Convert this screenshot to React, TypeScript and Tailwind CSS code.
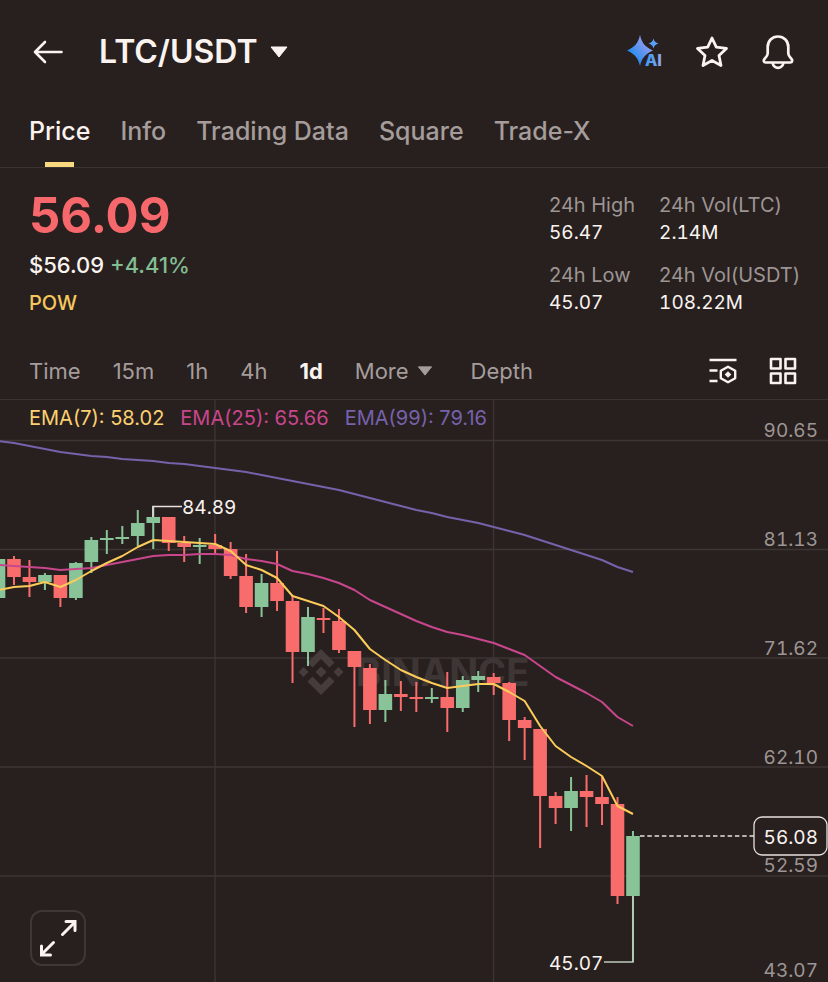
import React from 'react';

type Candle = [top: number, bottom: number, high: number, low: number, up: 0 | 1];

const STEP = 15.475;
const FIRST_X = -1.5;
const xAt = (index: number) => FIRST_X + index * STEP;

// Body top, body bottom, wick top, wick bottom, rising
const candles: Candle[] = [
  [159, 198, 159, 198, 1],
  [159, 177, 156, 185, 0],
  [177, 182, 160, 197, 0],
  [175, 182, 173, 190, 1],
  [175, 198, 175, 207, 0],
  [163, 198, 162, 200, 1],
  [140, 162, 137, 173, 1],
  [138, 140, 130, 154, 1],
  [137, 139, 126, 144, 1],
  [123, 136, 110, 146, 1],
  [117, 123, 106, 149, 1],
  [117, 143, 117, 151, 0],
  [143, 147, 136, 162, 0],
  [145, 147, 138, 164, 1],
  [145, 149, 134, 154, 0],
  [149, 176, 142, 179, 0],
  [176, 207, 154, 213, 0],
  [183, 207, 174, 217, 1],
  [183, 201, 151, 211, 0],
  [201, 252, 195, 283, 0],
  [217, 252, 207, 266, 1],
  [218, 220, 208, 233, 0],
  [221, 250, 209, 253, 0],
  [251, 267, 251, 327, 0],
  [268, 310, 264, 324, 0],
  [294, 310, 280, 322, 1],
  [294, 297, 281, 311, 0],
  [297, 299, 282, 312, 0],
  [297, 299, 288, 303, 1],
  [297, 308, 272, 332, 0],
  [280, 308, 276, 312, 1],
  [276, 280, 271, 292, 1],
  [277, 283, 273, 295, 0],
  [283, 320, 282, 341, 0],
  [320, 328, 317, 360, 0],
  [329, 396, 329, 448, 0],
  [396, 408, 392, 424, 0],
  [391, 408, 377, 431, 1],
  [391, 397, 375, 427, 0],
  [397, 404, 376, 425, 0],
  [404, 496, 397, 504, 0],
  [436, 496, 431, 562, 1],
];

const ema7 = [
  190, 187, 186, 182, 187, 180, 171, 163, 156, 147, 140, 141, 142, 143, 144, 151, 165, 170, 178, 196, 201,
  206, 217, 230, 249, 260, 270, 277, 283, 288, 286, 284, 284, 292, 301, 326, 346, 357, 366, 376, 406, 414,
];

const ema25 = [
  165, 166, 167, 168, 170, 169, 168, 165, 162, 159, 156, 155, 155, 154, 154, 155, 159, 161, 164, 171, 174,
  178, 183, 190, 200, 207, 214, 221, 227, 232, 235, 239, 243, 249, 255, 266, 277, 285, 293, 302, 317, 326,
];

const ema99 = [
  41, 43, 46, 49, 52, 54, 56, 57, 59, 60, 61, 63, 64, 66, 68, 70, 72, 75, 78, 81, 84,
  87, 90, 94, 98, 102, 106, 110, 113, 117, 120, 123, 127, 131, 135, 140, 145, 150, 155, 160, 167, 172,
];

const toPoints = (values: number[]) => values.map((y, i) => `${xAt(i)},${y}`).join(' ');

const priceLevels = [
  { label: '90.65', y: 37 },
  { label: '81.13', y: 146 },
  { label: '71.62', y: 255 },
  { label: '62.10', y: 364 },
  { label: '52.59', y: 472 },
  { label: '43.07', y: 577 },
];

const tabs = ['Price', 'Info', 'Trading Data', 'Square', 'Trade-X'];

const stats = [
  { label: '24h High', value: '56.47' },
  { label: '24h Vol(LTC)', value: '2.14M' },
  { label: '24h Low', value: '45.07' },
  { label: '24h Vol(USDT)', value: '108.22M' },
];

const BackIcon = () => (
  <svg viewBox="0 0 30 24" className="h-6 w-[30px]" fill="none" stroke="currentColor" strokeWidth="2.6" strokeLinecap="round" strokeLinejoin="round">
    <path d="M28.5 12H2M12 2L2 12l10 10" />
  </svg>
);

const Caret = ({ className }: { className: string }) => (
  <svg viewBox="0 0 18 12" className={className} fill="currentColor" stroke="currentColor" strokeWidth="1" strokeLinejoin="round">
    <path d="M1 1h16L9 11z" />
  </svg>
);

const AiIcon = () => (
  <svg viewBox="0 0 36 36" className="h-9 w-9">
    <defs>
      <linearGradient id="spark" x1="0" y1="1" x2="1" y2="0">
        <stop offset="0.3" stopColor="#2f8df0" />
        <stop offset="1" stopColor="#c6a3ee" />
      </linearGradient>
      <linearGradient id="letters" x1="0" y1="0" x2="1" y2="0">
        <stop offset="0.3" stopColor="#4a9df2" />
        <stop offset="1" stopColor="#9aa8f0" />
      </linearGradient>
    </defs>
    <path d="M13 1c1.9 8.500 5.500 12 13 15.500C18.500 20 15 23.500 13 32 11 23.500 7.500 20 0 16.500 7.500 13 11.100 9.500 13 1z" fill="url(#spark)" />
    <path d="M26.500 4.500c.8 3 2 4.200 5 5-3 .8-4.200 2-5 5-.8-3-2-4.200-5-5 3-.8 4.200-2 5-5z" fill="#58a0f3" />
    <text x="18" y="32" fontSize="16" fontWeight="800" fill="url(#letters)" stroke="#28201f" strokeWidth="2" paintOrder="stroke">AI</text>
  </svg>
);

const StarIcon = () => (
  <svg viewBox="0 0 34 34" className="h-[34px] w-[34px]" fill="none" stroke="currentColor" strokeWidth="2.8" strokeLinejoin="round">
    <path d="M17 3l4.300 9.200 10.200 1.200-7.500 7 2 10.100-9-5-9 5 2-10.100-7.500-7 10.200-1.200z" />
  </svg>
);

const BellIcon = () => (
  <svg viewBox="0 0 34 36" className="h-9 w-[34px]" fill="none" stroke="currentColor" strokeWidth="2.7" strokeLinejoin="round">
    <path d="M17 2.500c-6 0-10.300 4.500-10.300 10.500v6.500c0 2-1 3-3 5.200-1.600 1.700-1 3.800 1 3.800h24.600c2 0 2.600-2.100 1-3.800-2-2.200-3-3.200-3-5.200V13C27.300 7 23 2.500 17 2.500z" />
    <path d="M11.500 29c.8 3 2.800 4.800 5.500 4.800s4.700-1.800 5.500-4.800" />
  </svg>
);

const IndicatorIcon = () => (
  <svg viewBox="0 0 28 26" className="h-[26px] w-7" fill="none" stroke="currentColor" strokeWidth="2.4">
    <path d="M.5 2h27M.5 12.500h8M.5 23h8" />
    <path d="M19 8.800l7.200 4v7.400l-7.200 4-7.200-4v-7.400z" strokeLinejoin="round" />
    <path d="M19 13.200l3.300 3.300-3.300 3.300-3.300-3.300z" fill="currentColor" stroke="none" />
  </svg>
);

const LayoutIcon = () => (
  <svg viewBox="0 0 28 28" className="h-7 w-7" fill="none" stroke="currentColor" strokeWidth="2.6" strokeLinejoin="round">
    <rect x="2" y="2" width="9.500" height="9.500" />
    <rect x="16.500" y="2" width="9.500" height="9.500" />
    <rect x="2" y="16.500" width="9.500" height="9.500" />
    <rect x="16.500" y="16.500" width="9.500" height="9.500" />
  </svg>
);

const ExpandIcon = () => (
  <svg viewBox="0 0 38 38" className="h-[38px] w-[38px]" fill="none" stroke="currentColor" strokeWidth="3" strokeLinecap="round">
    <path d="M23.500 15.500L35.500 3.500M27 2.500h9v9" />
    <path d="M14.500 23.500L3 35M2.500 27v9h9" />
  </svg>
);

const Header = () => (
  <header className="flex items-center justify-between px-[33px] pt-7">
    <div className="flex items-center gap-9">
      <button type="button" aria-label="Back">
        <BackIcon />
      </button>
      <button type="button" className="flex items-center gap-3">
        <h1 className="text-[32px] leading-[48px] font-semibold">LTC/USDT</h1>
        <Caret className="h-3 w-[18px]" />
      </button>
    </div>
    <div className="flex items-center gap-8">
      <button type="button" aria-label="AI assistant">
        <AiIcon />
      </button>
      <button type="button" aria-label="Favorite">
        <StarIcon />
      </button>
      <button type="button" aria-label="Alerts">
        <BellIcon />
      </button>
    </div>
  </header>
);

const Tabs = () => (
  <nav className="mt-8 flex gap-[30px] border-b border-[#3a3231] px-[29px] text-[25px] leading-[46px] font-medium text-[#a59d9b]">
    {tabs.map((tab, index) => (
      <a key={tab} href="#" className={index === 0 ? 'flex flex-col items-center text-[#fbf3ef]' : 'flex flex-col items-center'}>
        {tab}
        <span className={index === 0 ? 'mt-2 h-[5px] w-[29px] bg-[#f8d97f]' : 'mt-2 h-[5px]'} />
      </a>
    ))}
  </nav>
);

const Summary = () => (
  <section className="flex justify-between pt-5 pr-7 pl-[29px]">
    <div>
      <p className="text-[49px] leading-[55px] font-bold text-[#f6686b]">56.09</p>
      <p className="mt-2 text-[22px] leading-7 font-medium">
        $56.09 <span className="text-[#83bd92]">+4.41%</span>
      </p>
      <a href="#" className="mt-3 block text-[20px] leading-6 font-medium text-[#f6c75e]">POW</a>
    </div>
    <dl className="mt-1 grid grid-cols-[auto_auto] content-start gap-x-6 gap-y-4 leading-[27px]">
      {stats.map((stat) => (
        <div key={stat.label}>
          <dt className="text-[20px] text-[#9d9593]">{stat.label}</dt>
          <dd className="text-[19px] tabular-nums">{stat.value}</dd>
        </div>
      ))}
    </dl>
  </section>
);

const Toolbar = () => (
  <div className="mt-[41px] flex items-center justify-between border-b border-[#3a3231] pr-[31px] pb-[14px] pl-[29px] text-[22px] leading-7 text-[#a59d9b]">
    <div className="flex items-center gap-[38px]">
      <div className="flex items-center gap-8">
        <button type="button">Time</button>
        <button type="button">15m</button>
        <button type="button">1h</button>
        <button type="button">4h</button>
        <button type="button" className="font-bold text-[#fbf3ef]">1d</button>
        <button type="button" className="flex items-center gap-2">
          More
          <Caret className="h-[10px] w-4" />
        </button>
      </div>
      <button type="button">Depth</button>
    </div>
    <div className="flex items-center gap-8 text-[#fbf3ef]">
      <button type="button" aria-label="Indicators">
        <IndicatorIcon />
      </button>
      <button type="button" aria-label="Layout">
        <LayoutIcon />
      </button>
    </div>
  </div>
);

const Chart = () => (
  <section className="relative">
    <svg viewBox="0 0 828 582" className="block w-full tabular-nums" role="img" aria-label="LTC/USDT daily candles">
      <g stroke="#3d3534" strokeWidth="1.4">
        {[40.5, 149.5, 258, 367, 476].map((y) => (
          <line key={y} x1="0" x2="828" y1={y} y2={y} />
        ))}
        <line x1="215" x2="215" y1="0" y2="582" />
        <line x1="493.5" x2="493.5" y1="0" y2="582" />
      </g>

      {/* Watermark */}
      <path
        d="M321 249l13.500 13.500-5 5-8.500-8.500-8.500 8.500-5-5zM321 295l-13.500-13.500 5-5 8.500 8.500 8.500-8.500 5 5zM303.500 267l5 5-5 5-5-5zM338.500 267l5 5-5 5-5-5zM321 266.500l5.500 5.500-5.500 5.500-5.500-5.500z"
        fill="#453c3b"
      />
      <text x="356" y="286" fontSize="38" fontWeight="700" fill="#3e3635">BINANCE</text>

      {candles.map(([top, bottom, high, low, up], i) => (
        <g key={i} fill={up ? '#88c497' : '#f96c6c'}>
          <rect x={xAt(i) - 1} y={high} width="2" height={low - high} />
          <rect x={xAt(i) - 6.8} y={top} width="13.6" height={bottom - top} />
        </g>
      ))}

      <g fill="none" strokeWidth="2" strokeLinejoin="round">
        <polyline points={toPoints(ema99)} stroke="#7662ab" />
        <polyline points={toPoints(ema25)} stroke="#c8468c" />
        <polyline points={toPoints(ema7)} stroke="#fccb59" />
      </g>

      {/* High and low callouts */}
      <g fill="none" stroke="#e8e0dc" strokeWidth="1.5">
        <path d="M153 117v-10.500h29" />
        <path d="M633 496v66h-29" stroke="#bfcabb" />
        <path d="M640 436h114" strokeDasharray="4.5 2.8" />
      </g>
      <g fontSize="19" fill="#fbf3ef">
        <text x="182" y="114">84.89</text>
        <text x="549" y="570">45.07</text>
      </g>

      <g fontSize="19" fill="#9d9593" textAnchor="end">
        {priceLevels.map((level) => (
          <text key={level.label} x="818" y={level.y}>{level.label}</text>
        ))}
      </g>
      <rect x="754" y="417" width="73" height="38" rx="8" fill="#28201f" stroke="#e8e0dc" strokeWidth="1.3" />
      <text x="818" y="444" fontSize="19" fill="#fbf3ef" textAnchor="end">56.08</text>
    </svg>

    <div className="absolute top-1 left-[29px] flex gap-4 text-[20px] leading-7">
      <span className="text-[#fcd070]">EMA(7): 58.02</span>
      <span className="text-[#c8468c]">EMA(25): 65.66</span>
      <span className="text-[#7662ab]">EMA(99): 79.16</span>
    </div>

    <button
      type="button"
      aria-label="Full screen"
      className="absolute bottom-4 left-[30px] flex h-14 w-14 items-center justify-center rounded-xl border-2 border-[#3f3736] bg-[#28201f]"
    >
      <ExpandIcon />
    </button>
  </section>
);

const App: React.FC = () => {
  return (
    <main className="min-h-screen bg-[#28201f] font-['Inter',sans-serif] text-[#fbf3ef]">
      <Header />
      <Tabs />
      <Summary />
      <Toolbar />
      <Chart />
    </main>
  );
};

export default App;
